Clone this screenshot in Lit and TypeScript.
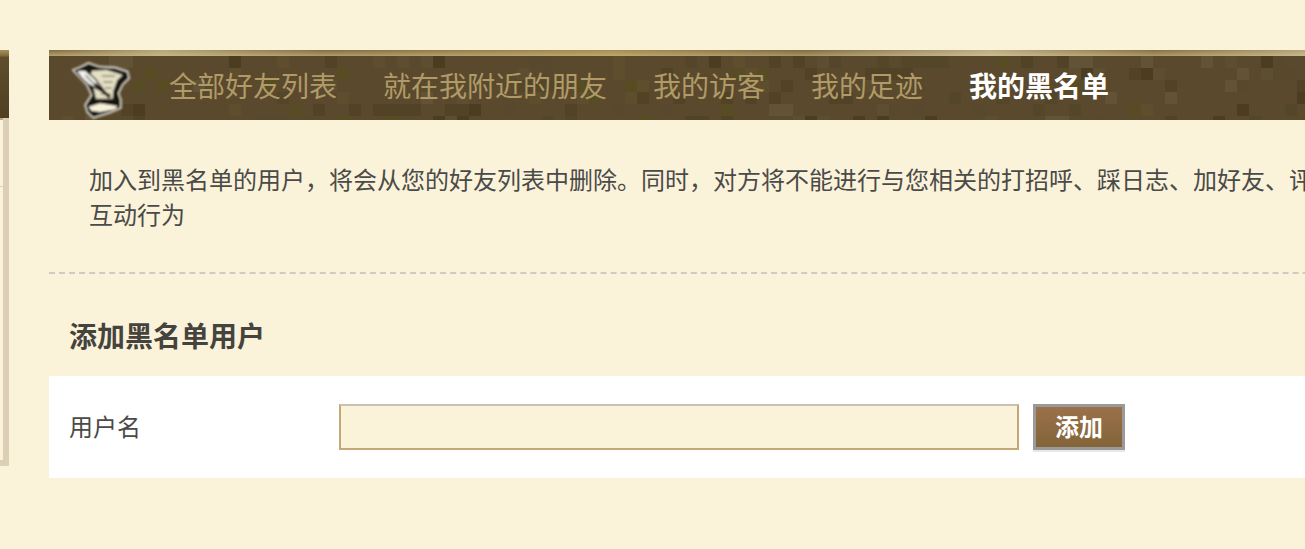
import { LitElement, css, html, svg } from 'lit'
import { customElement } from 'lit/decorators.js'

const navItems = ['全部好友列表', '就在我附近的朋友', '我的访客', '我的足迹', '我的黑名单']
const ACTIVE = 4

// the header's worn pixel texture, fixed seed so it stays the same every load
function blocks(width: number) {
  const shades = ['#524226', '#5f4e2d', '#58492e', '#4c3c20', '#625236', '#574c24', '#544729', '#5d4e31']
  const out = []
  let seed = 17
  for (let y = 0; y < 64; y += 12) {
    for (let x = 0; x < width; x += 12) {
      seed = (seed * 1103515245 + 12345) & 0x7fffffff
      if (seed % 100 < 26) {
        out.push(svg`<rect x=${x} y=${y} width="12" height="12" fill=${shades[(seed >> 8) % shades.length]}></rect>`)
      }
    }
  }
  return out
}

@customElement('app-root')
export class AppRoot extends LitElement {
  renderScroll() {
    return html`
      <svg class="scroll" viewBox="0 0 240 225" aria-hidden="true">
        <defs><filter id="soft"><feGaussianBlur stdDeviation="2.4"></feGaussianBlur></filter></defs>
        <g filter="url(#soft)">
          <path d="M38 60 L62 50 L85 38 L120 50 L165 52 L203 64 L208 85 L188 105 L176 130 L183 150 L183 174 L150 188 L100 204 L82 188 L75 165 L94 135 L80 105 Z"
            fill="#14120e" stroke="#d8d6cc" stroke-width="5" stroke-linejoin="round"></path>
          <path d="M96 62 L140 60 L188 75 L172 90 L160 122 L158 146 L108 146 L100 110 L92 74 Z" fill="#e4e0c4"></path>
          <path d="M125 78 H165 M130 96 H158 M135 114 H155 M122 132 H152" stroke="#8a8670" stroke-width="5"></path>
          <path d="M86 170 L120 160 L172 168 L166 178 L120 186 L94 182 Z" fill="#f6f2da"></path>
          <path d="M48 62 L75 60 L106 87 L134 124 L122 122 L86 104 L64 84 Z" fill="#f2f2ee" stroke="#14120e" stroke-width="4"></path>
          <path d="M76 76 L106 106" stroke="#6c6960" stroke-width="4"></path>
          <path d="M104 102 L150 142" stroke="#0a0806" stroke-width="9"></path>
        </g>
      </svg>
    `
  }

  render() {
    return html`
      <div class="page">
        <aside class="side">
          <div class="side-head"></div>
          <div class="side-body">
            <div class="side-row"></div>
            <div class="side-row"></div>
          </div>
        </aside>

        <main class="main">
          <nav class="nav">
            <svg class="texture" width="1256" height="64" aria-hidden="true">${blocks(1256)}</svg>
            <div class="nav-items">
              ${this.renderScroll()}
              ${navItems.map((item, i) => html`<a class=${i === ACTIVE ? 'active' : ''}>${item}</a>`)}
            </div>
          </nav>

          <p class="desc">加入到黑名单的用户，将会从您的好友列表中删除。同时，对方将不能进行与您相关的打招呼、踩日志、加好友、评论、留言等互动行为</p>

          <h3 class="title">添加黑名单用户</h3>

          <div class="form">
            <label>用户名</label>
            <input type="text" />
            <button>添加</button>
          </div>
        </main>
      </div>
    `
  }

  static styles = css`
    :host {
      display: block;
      height: 549px;
      overflow: hidden;
      background: #fbf2da;
      font-family: "Noto Sans CJK SC", "Liberation Sans", sans-serif;
      color: #444;
    }
    .page {
      display: flex;
      align-items: flex-start;
      width: 1305px;
      padding-top: 50px;
    }
    .side {
      flex: none;
      width: 9px;
      margin-right: 40px;
    }
    .side-head {
      height: 68px;
      background: linear-gradient(#a8925c 0, #7d6a3c 6px, #5f4d2c 7px, #4f3f22 100%);
    }
    .side-body {
      height: 348px;
      box-sizing: border-box;
      background: #fbf2da;
      border-right: 6px solid #dccfb5;
      border-bottom: 6px solid #dccfb5;
    }
    .side-row {
      height: 68px;
      border-bottom: 1px solid #d8d3c6;
    }
    .side-row:first-child {
      border-top: 2px solid #c6a877;
      height: 66px;
    }
    .side-row:last-child {
      border-bottom: none;
    }
    .main {
      flex: none;
      width: 1256px;
    }
    .nav {
      position: relative;
      height: 70px;
      overflow: hidden;
      box-sizing: border-box;
      padding-top: 6px;
      background:
        linear-gradient(#7f6c42, #b3a06e) top / 100% 6px no-repeat,
        #5a492c;
    }
    .nav::before {
      content: "";
      position: absolute;
      left: 0;
      top: 0;
      width: 100%;
      height: 6px;
      background: linear-gradient(90deg, rgba(190,170,120,0) 0, rgba(205,190,145,.7) 9%, rgba(150,125,70,.1) 22%, rgba(205,175,105,.5) 45%, rgba(120,105,70,.2) 60%, rgba(215,200,160,.7) 75%, rgba(150,130,80,.2) 88%, rgba(215,200,160,.6) 100%);
    }
    .texture {
      position: absolute;
      left: 0;
      top: 6px;
    }
    .nav-items {
      position: relative;
      display: flex;
      align-items: center;
      gap: 46px;
      height: 58px;
      padding-left: 120px;
    }
    .scroll {
      position: absolute;
      left: 11px;
      top: -6px;
      width: 80px;
      height: 75px;
    }
    .nav a {
      font-size: 28px;
      line-height: 58px;
      color: #b09a68;
      white-space: nowrap;
    }
    .nav a.active {
      color: #fff;
      font-weight: 700;
    }
    .desc {
      margin: 0;
      padding: 41px 0 41px 40px;
      width: 1350px;
      font-size: 24px;
      line-height: 35px;
      color: #4a4a48;
      border-bottom: 2px dashed #cfcbc0;
    }
    .title {
      margin: 0;
      padding: 41px 0 21px 20px;
      font-size: 28px;
      line-height: 40px;
      font-weight: 700;
      color: #45433e;
    }
    .form {
      display: flex;
      align-items: center;
      height: 102px;
      padding-left: 20px;
      background: #fff;
      box-sizing: border-box;
    }
    .form label {
      width: 270px;
      padding-bottom: 4px;
      font-size: 24px;
      color: #4a4a48;
    }
    .form input {
      box-sizing: border-box;
      width: 680px;
      height: 46px;
      margin: 0 14px 0 0;
      padding: 0;
      background: #fbf2da;
      border: 2px solid #c6a877;
      border-top-color: #c9c2b2;
      outline: none;
    }
    .form button {
      box-sizing: border-box;
      width: 92px;
      height: 46px;
      padding: 0 0 4px;
      font: 700 24px "Noto Sans CJK SC", sans-serif;
      color: #fff;
      background: linear-gradient(#9a714a, #836439);
      border: 3px solid #9a9a9a;
      box-shadow: 0 2px 0 #e8e8ea;
    }
  `
}

declare global {
  interface HTMLElementTagNameMap {
    'app-root': AppRoot;
  }
}
